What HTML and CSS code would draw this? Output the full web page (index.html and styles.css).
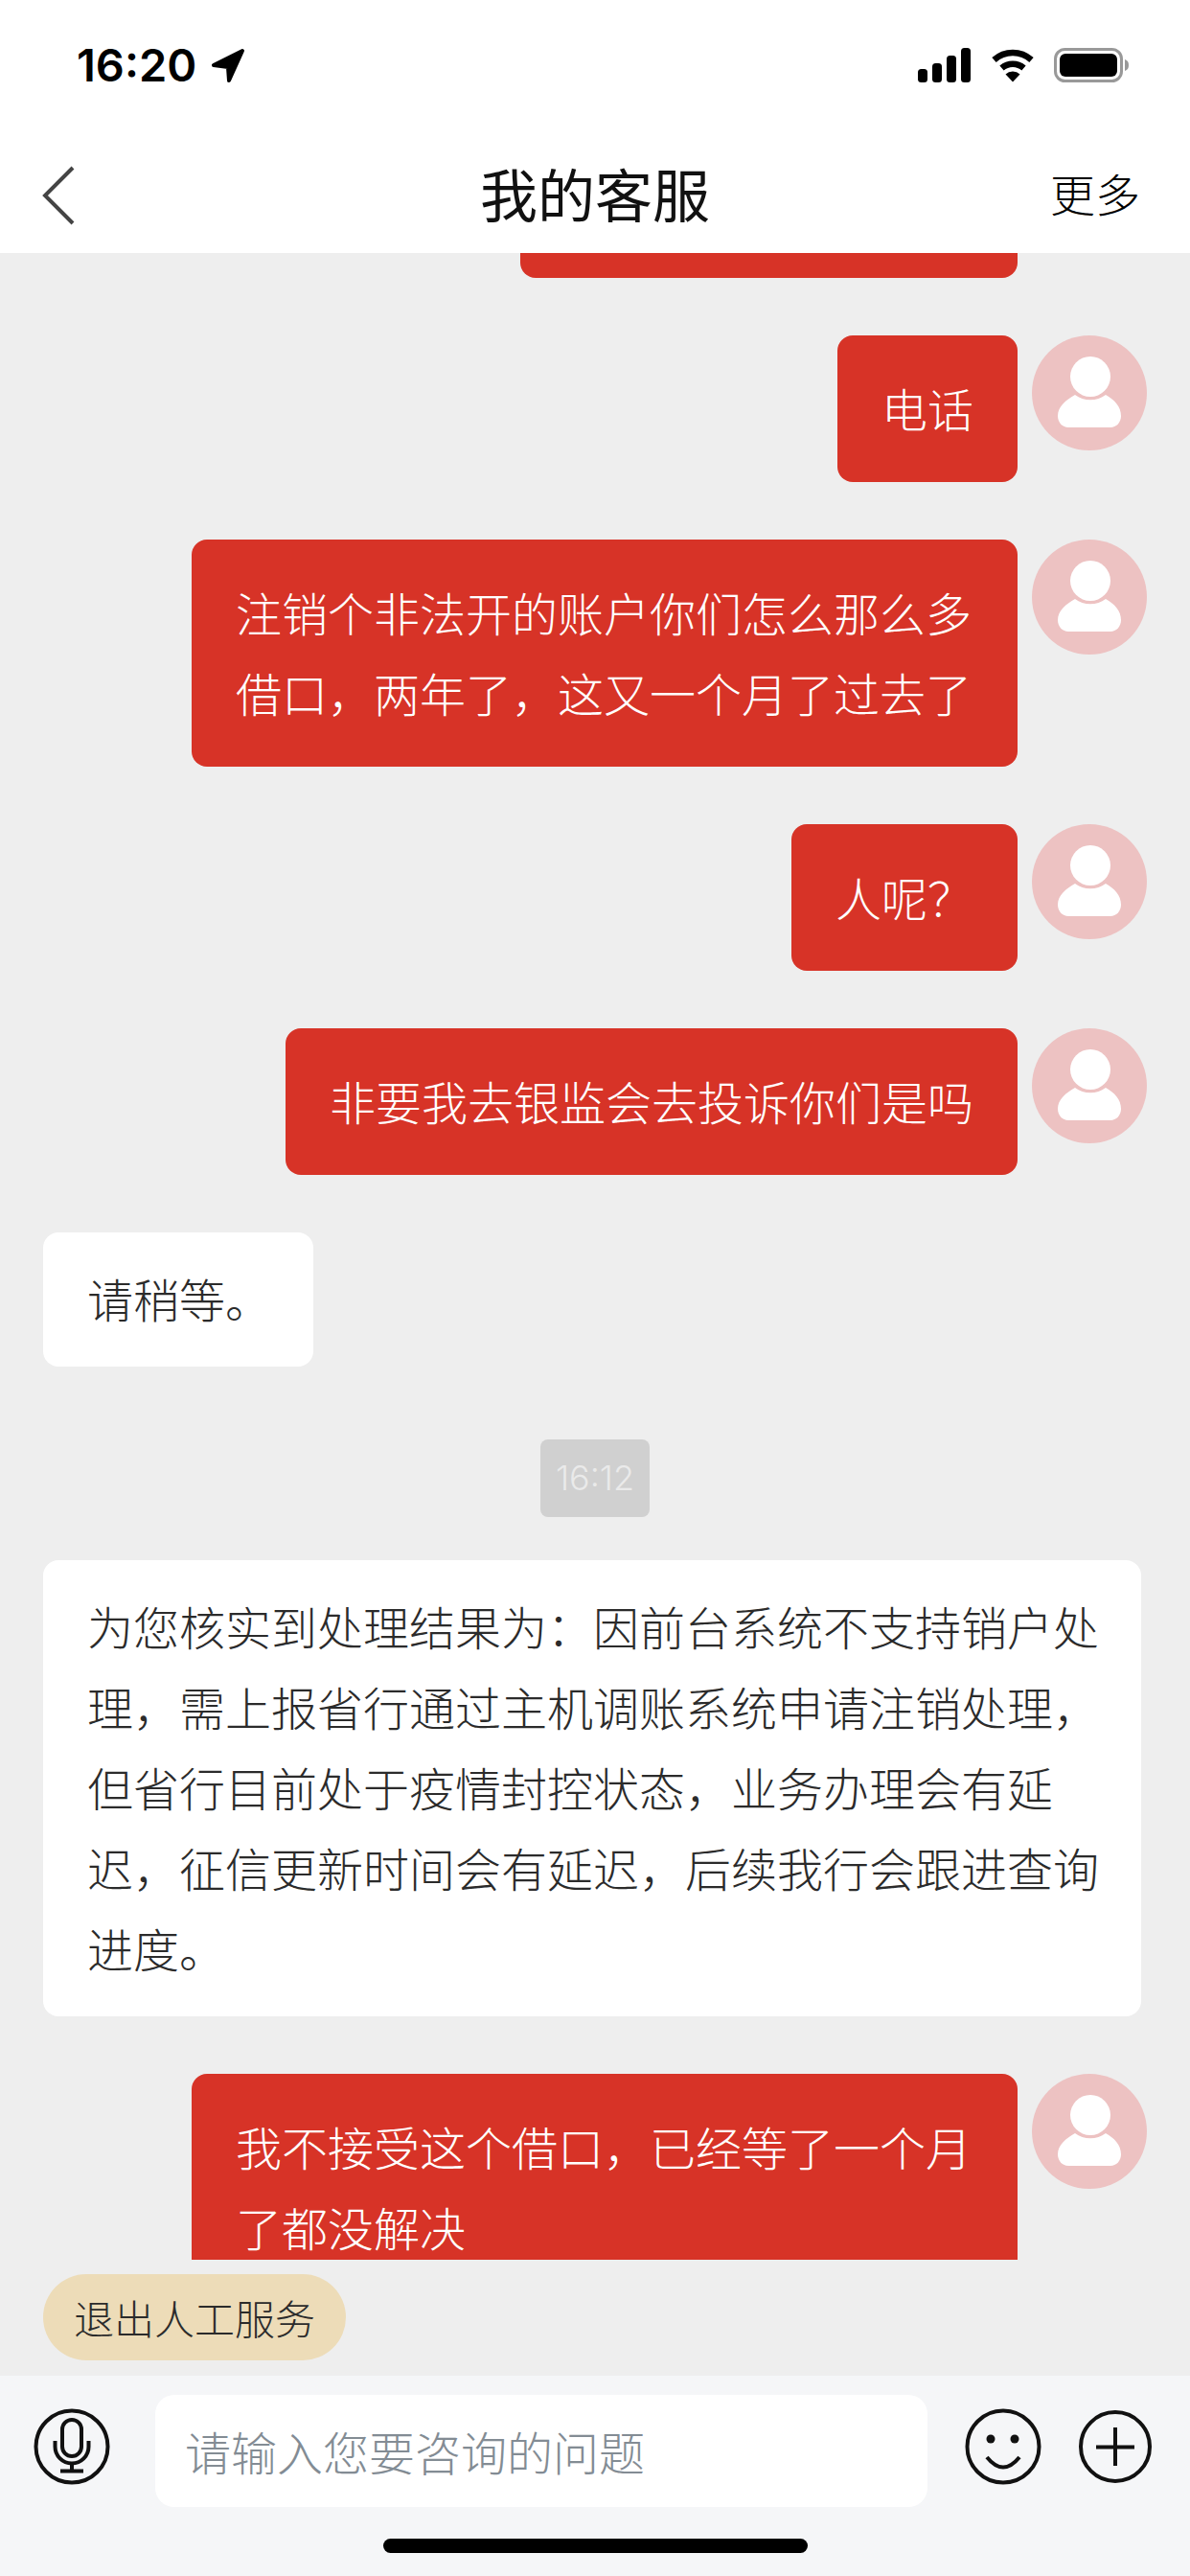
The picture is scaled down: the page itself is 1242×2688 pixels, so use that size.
FILE: index.html

```html
<!DOCTYPE html>
<html lang="zh-CN">
<head>
  <meta charset="UTF-8" />
  <meta name="viewport" content="width=device-width, initial-scale=1.0"/>
  <title>我的客服</title>
  <link rel="stylesheet" href="styles.css">
</head>
<body>
  <div class="status-bar">
    <div class="status-left">
      <span class="clock">16:20</span>
      <svg class="arrow" width="36" height="37" viewBox="0 0 36 37">
        <path d="M33 3 L3 18 L18 20 L19 34 Z" fill="#000" stroke="#000" stroke-width="4" stroke-linejoin="round"/>
      </svg>
    </div>
    <div class="status-right">
      <svg width="56" height="36" viewBox="0 0 56 36">
        <rect x="0" y="22" width="10" height="14" rx="3.5"/>
        <rect x="15" y="16" width="10" height="20" rx="3.5"/>
        <rect x="30" y="8" width="10" height="28" rx="3.5"/>
        <rect x="45" y="0" width="10" height="36" rx="3.5"/>
      </svg>
      <svg width="46" height="36" viewBox="0 0 46 36">
        <path d="M3.5 12.5 A29 29 0 0 1 42.5 12.5" fill="none" stroke="#000" stroke-width="6.5"/>
        <path d="M11.5 21 A17.5 17.5 0 0 1 34.5 21" fill="none" stroke="#000" stroke-width="6.5"/>
        <path d="M15.5 27.5 A11 11 0 0 1 30.5 27.5 L23 35.5 Z" fill="#000"/>
      </svg>
      <svg width="78" height="36" viewBox="0 0 78 36">
        <rect x="1.5" y="1.5" width="69" height="33" rx="10" fill="none" stroke="#999" stroke-width="3"/>
        <rect x="6" y="6" width="60" height="24" rx="6"/>
        <path d="M74 12 C77 13 78 15 78 18 C78 21 77 23 74 24 Z" fill="#999"/>
      </svg>
    </div>
  </div>

  <header class="nav">
    <svg class="back" width="34" height="62" viewBox="0 0 34 62">
      <path d="M32 2 L3 31 L32 60" fill="none" stroke="#444" stroke-width="4"/>
    </svg>
    <h1>我的客服</h1>
    <span class="more">更多</span>
  </header>

  <main class="chat">
    <div class="bubble mine cut"></div>

    <div class="row">
      <div class="bubble mine">电话</div>
      <svg class="avatar" viewBox="0 0 120 120"><use href="#person"/></svg>
    </div>
    <div class="row">
      <div class="bubble mine">注销个非法开的账户你们怎么那么多借口&#xFF0C;两年了&#xFF0C;这又一个月了过去了</div>
      <svg class="avatar" viewBox="0 0 120 120"><use href="#person"/></svg>
    </div>
    <div class="row">
      <div class="bubble mine">人呢&#xFF1F;</div>
      <svg class="avatar" viewBox="0 0 120 120"><use href="#person"/></svg>
    </div>
    <div class="row">
      <div class="bubble mine">非要我去银监会去投诉你们是吗</div>
      <svg class="avatar" viewBox="0 0 120 120"><use href="#person"/></svg>
    </div>

    <div class="row left">
      <div class="bubble theirs">请稍等。</div>
    </div>

    <div class="time"><span>16:12</span></div>

    <div class="row left after-time">
      <div class="bubble theirs">为您核实到处理结果为&#xFF1A;因前台系统不支持销户处理&#xFF0C;需上报省行通过主机调账系统申请注销处理&#xFF0C;但省行目前处于疫情封控状态&#xFF0C;业务办理会有延迟&#xFF0C;征信更新时间会有延迟&#xFF0C;后续我行会跟进查询进度。</div>
    </div>

    <div class="row">
      <div class="bubble mine">我不接受这个借口&#xFF0C;已经等了一个月了都没解决</div>
      <svg class="avatar" viewBox="0 0 120 120"><use href="#person"/></svg>
    </div>
  </main>

  <div class="quick">
    <span class="quick-btn">退出人工服务</span>
  </div>

  <footer class="composer">
    <div class="composer-row">
      <svg class="tool mic" width="80" height="80" viewBox="0 0 80 80">
        <circle cx="40" cy="40" r="37.5"/>
        <rect x="30" y="12" width="20" height="38" rx="10"/>
        <path d="M22.5 34 V40 A17.5 17.5 0 0 0 57.5 40 V34"/>
        <path d="M40 57.5 V65 M28 65.5 H52"/>
      </svg>
      <div class="input-box">请输入您要咨询的问题</div>
      <svg class="tool smile" width="80" height="80" viewBox="0 0 80 80">
        <circle cx="40" cy="40" r="37.5"/>
        <circle class="eye" cx="27" cy="32" r="4.5"/>
        <circle class="eye" cx="52" cy="32" r="4.5"/>
        <path d="M23 51 Q40 72 57 51"/>
      </svg>
      <svg class="tool plus" width="80" height="80" viewBox="0 0 80 80">
        <circle cx="40" cy="40" r="36"/>
        <path d="M20 40.5 H60 M40 20 V60"/>
      </svg>
    </div>
    <div class="home-bar"></div>
  </footer>

  <svg class="defs" width="0" height="0">
    <defs>
      <g id="person">
        <circle cx="60" cy="60" r="60" fill="#edc2c2"/>
        <circle cx="61" cy="43" r="21" fill="#fff"/>
        <path d="M45 62 C54 69 68 69 77 62 C86 67 93 74 93 84 C93 91 88 96 82 96 H38 C32 96 27 91 27 84 C27 74 36 67 45 62 Z" fill="#fff"/>
      </g>
    </defs>
  </svg>
</body>
</html>
```

FILE: styles.css

```css
body {
  font-family: "Noto Sans CJK SC", "Noto Sans", sans-serif;
  margin: 0;
  padding: 0;
  width: 1242px;
  height: 2688px;
  overflow: hidden;
  background: #eee;
  color: #333;
}
.status-bar {
  background: #fff;
  height: 144px;
  padding: 50px 64px 0 80px;
  box-sizing: border-box;
  display: flex;
  justify-content: space-between;
  align-items: flex-start;
}
.status-left {
  display: flex;
  align-items: center;
  gap: 15px;
  height: 36px;
}
.clock {
  font-family: Inter, sans-serif;
  font-size: 47px;
  font-weight: 600;
  color: #000;
  line-height: 36px;
}
.status-right {
  display: flex;
  gap: 20px;
  height: 36px;
}
.nav {
  background: #fff;
  height: 120px;
  padding: 0 52px;
  display: grid;
  grid-template-columns: 1fr auto 1fr;
  align-items: center;
}
.back {
  margin-left: -8px;
}
.nav h1 {
  margin: 0 0 6px;
  font-size: 60px;
  font-weight: 400;
  color: #111;
  line-height: 80px;
}
.more {
  justify-self: end;
  font-size: 47px;
  font-weight: 300;
  color: #000;
  margin-bottom: 8px;
}
.chat {
  height: 2094px;
  overflow: hidden;
  padding-right: 45px;
}
.row {
  display: flex;
  justify-content: flex-end;
  align-items: flex-start;
  gap: 15px;
  margin-top: 60px;
}
.row.left {
  justify-content: flex-start;
  padding-left: 45px;
}
.row.after-time {
  margin-top: 45px;
}
.avatar {
  width: 120px;
  height: 120px;
  flex-shrink: 0;
}
.bubble {
  font-size: 48px;
  font-weight: 300;
  line-height: 84px;
  border-radius: 16px;
  box-sizing: border-box;
}
.mine {
  background: #d73327;
  color: #fff;
  padding: 33px 46px 36px;
  max-width: 862px;
}
.theirs {
  background: #fff;
  color: #2b2b2b;
  padding: 26px 44px 30px 46px;
  max-width: 1146px;
}
.cut {
  width: 519px;
  height: 26px;
  padding: 0;
  margin: 0 135px 0 auto;
  border-radius: 0 0 16px 16px;
}
.time {
  display: flex;
  justify-content: center;
  margin-top: 76px;
  padding-left: 45px;
}
.time span {
  background: #d0d0d0;
  color: #eaeaea;
  font-family: Inter, sans-serif;
  font-size: 36px;
  font-weight: 300;
  width: 114px;
  height: 81px;
  line-height: 81px;
  text-align: center;
  border-radius: 8px;
}
.quick {
  height: 121px;
  padding: 15px 45px 0;
  box-sizing: border-box;
}
.quick-btn {
  display: inline-block;
  height: 90px;
  line-height: 90px;
  padding: 0 32px;
  font-size: 42px;
  font-weight: 300;
  color: #2b2b2b;
  background: #eddcb8;
  border-radius: 45px;
}
.composer {
  background: #f5f6f8;
  height: 209px;
  padding-top: 20px;
  box-sizing: border-box;
}
.composer-row {
  display: flex;
  align-items: flex-start;
  padding-left: 35px;
}
.tool {
  margin-top: 14px;
  flex-shrink: 0;
  fill: none;
  stroke: #111;
  stroke-width: 4;
}
.eye {
  fill: #111;
  stroke: none;
}
.smile {
  margin-left: 39px;
}
.plus {
  margin-left: 37px;
}
.input-box {
  margin-left: 47px;
  width: 806px;
  height: 117px;
  line-height: 117px;
  padding-left: 31px;
  box-sizing: border-box;
  background: #fff;
  border-radius: 20px;
  font-size: 48px;
  font-weight: 300;
  color: #838c94;
}
.home-bar {
  width: 443px;
  height: 15px;
  margin: 33px auto 0;
  background: #000;
  border-radius: 8px;
}
.defs {
  position: absolute;
}
```
